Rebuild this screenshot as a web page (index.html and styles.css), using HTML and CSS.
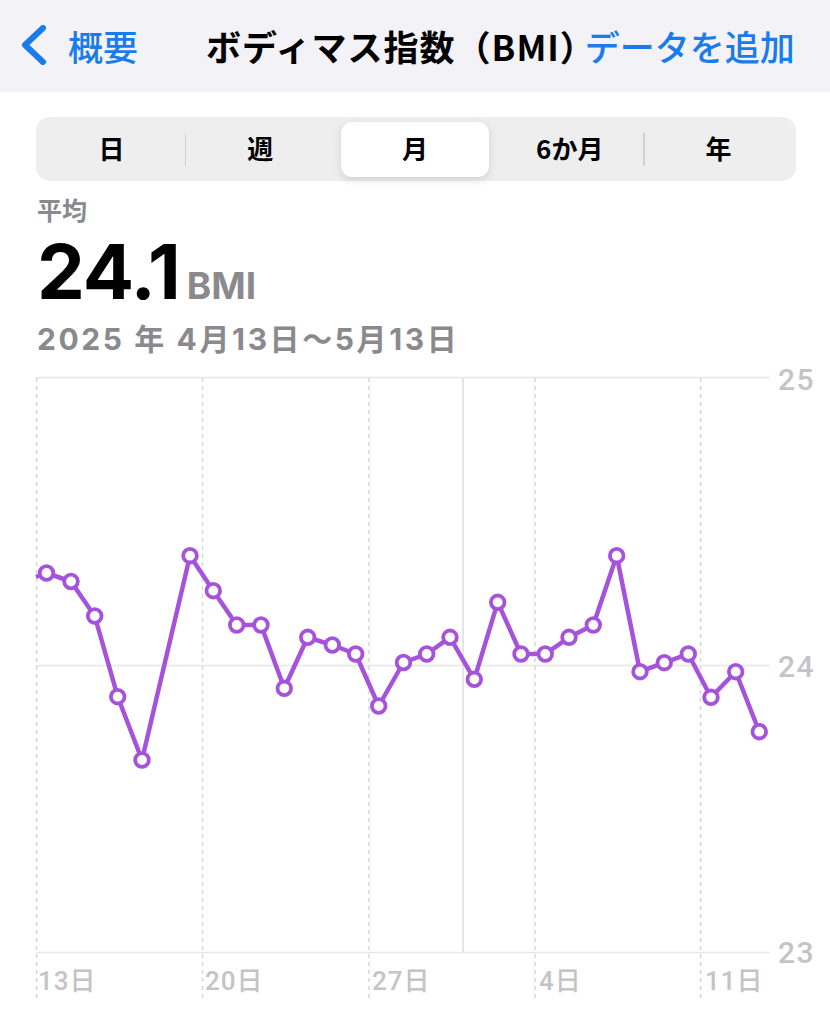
FILE: index.html
```html
<!DOCTYPE html>
<html lang="ja">
<head>
<meta charset="utf-8">
<title>ボディマス指数（BMI）</title>
<link rel="stylesheet" href="styles.css">
</head>
<body>
<header class="nav">
  <div class="back">
    <svg class="chev" width="28" height="40" viewBox="0 0 28 40"><polyline points="23,3 5,20 23,37" fill="none" stroke="#1a7bea" stroke-width="6" stroke-linecap="round" stroke-linejoin="round"/></svg>
    <span class="back-label">概要</span>
  </div>
  <h1 class="title">ボディマス指数（BMI）</h1>
  <span class="add">データを追加</span>
</header>

<div class="segmented">
  <div class="seg">日</div>
  <div class="seg sep">週</div>
  <div class="seg selected">月</div>
  <div class="seg">6か月</div>
  <div class="seg sep">年</div>
</div>

<section class="summary">
  <div class="label">平均</div>
  <div class="value"><span class="num">24.1</span><span class="unit">BMI</span></div>
  <div class="range">2025 年 4月13日～5月13日</div>
</section>

<svg class="chart" width="830" height="664" viewBox="0 360 830 664">
  <g class="grid-h" stroke="#e6e6e8" stroke-width="1.5">
    <line x1="36" y1="377.5" x2="770" y2="377.5"/>
    <line x1="36" y1="665.5" x2="770" y2="665.5"/>
    <line x1="36" y1="952.5" x2="770" y2="952.5"/>
  </g>
  <g stroke="#d6d6d8" stroke-width="1.5" stroke-dasharray="4 4">
    <line x1="36.5" y1="378" x2="36.5" y2="1000"/>
    <line x1="202.5" y1="378" x2="202.5" y2="1000"/>
    <line x1="369" y1="378" x2="369" y2="1000"/>
    <line x1="535" y1="378" x2="535" y2="1000"/>
    <line x1="700.5" y1="378" x2="700.5" y2="1000"/>
  </g>
  <line x1="463" y1="378" x2="463" y2="952" stroke="#dcdcde" stroke-width="1.5"/>
  <g class="ylab">
    <text x="778" y="390">25</text>
    <text x="778" y="677">24</text>
    <text x="778" y="963">23</text>
  </g>
  <g class="xlab">
    <text x="38" y="990">13日</text>
    <text x="205" y="990">20日</text>
    <text x="372" y="990">27日</text>
    <text x="539" y="990">4日</text>
    <text x="705" y="990">11日</text>
  </g>
  <polyline fill="none" stroke="#a653dc" stroke-width="4.5" stroke-linejoin="round" points="36,577 46.5,573 71,581.5 94.7,616 117.7,696.7 142,760 190,555.7 213.3,590.7 236.7,625 261,625 284.3,688.3 307.7,637.3 332.3,645 355.7,654 378.7,706 403.5,662.5 426.7,654 450,637.3 474.3,679.3 497.7,602.3 521,654 545.3,654 569,637.3 593.3,625 616.7,555.7 640,671.7 664.3,662.7 688.3,654 711,697.3 735.7,671.7 759.3,731.7"/>
  <g fill="#ffffff" stroke="#a653dc" stroke-width="3.8">
    <circle cx="46.5" cy="573" r="6.8"/>
    <circle cx="71" cy="581.5" r="6.8"/>
    <circle cx="94.7" cy="616" r="6.8"/>
    <circle cx="117.7" cy="696.7" r="6.8"/>
    <circle cx="142" cy="760" r="6.8"/>
    <circle cx="190" cy="555.7" r="6.8"/>
    <circle cx="213.3" cy="590.7" r="6.8"/>
    <circle cx="236.7" cy="625" r="6.8"/>
    <circle cx="261" cy="625" r="6.8"/>
    <circle cx="284.3" cy="688.3" r="6.8"/>
    <circle cx="307.7" cy="637.3" r="6.8"/>
    <circle cx="332.3" cy="645" r="6.8"/>
    <circle cx="355.7" cy="654" r="6.8"/>
    <circle cx="378.7" cy="706" r="6.8"/>
    <circle cx="403.5" cy="662.5" r="6.8"/>
    <circle cx="426.7" cy="654" r="6.8"/>
    <circle cx="450" cy="637.3" r="6.8"/>
    <circle cx="474.3" cy="679.3" r="6.8"/>
    <circle cx="497.7" cy="602.3" r="6.8"/>
    <circle cx="521" cy="654" r="6.8"/>
    <circle cx="545.3" cy="654" r="6.8"/>
    <circle cx="569" cy="637.3" r="6.8"/>
    <circle cx="593.3" cy="625" r="6.8"/>
    <circle cx="616.7" cy="555.7" r="6.8"/>
    <circle cx="640" cy="671.7" r="6.8"/>
    <circle cx="664.3" cy="662.7" r="6.8"/>
    <circle cx="688.3" cy="654" r="6.8"/>
    <circle cx="711" cy="697.3" r="6.8"/>
    <circle cx="735.7" cy="671.7" r="6.8"/>
    <circle cx="759.3" cy="731.7" r="6.8"/>
  </g>
</svg>
</body>
</html>
```
FILE: styles.css
```css
* { box-sizing: border-box; }
html, body { margin: 0; padding: 0; background: #ffffff; }
body {
  width: 830px;
  height: 1024px;
  overflow: hidden;
  font-family: Inter, "Noto Sans CJK JP", sans-serif;
  color: #000;
}
.nav {
  height: 92px;
  background: #f2f2f7;
  display: flex;
  align-items: center;
  padding: 0 0 2px 20px;
}
.back {
  display: flex;
  align-items: center;
  gap: 20px;
  color: #1a7bea;
}
.chev { display: block; }
.back-label {
  font-family: "Noto Sans CJK JP", sans-serif;
  font-size: 35px;
  font-weight: 500;
  line-height: 1;
}
.title {
  margin: 0 0 0 68px;
  font-family: "Noto Sans CJK JP", sans-serif;
  font-size: 35px;
  font-weight: 700;
  line-height: 1;
  letter-spacing: 1px;
  white-space: nowrap;
}
.add {
  margin-left: -11px;
  font-family: "Noto Sans CJK JP", sans-serif;
  font-size: 35px;
  font-weight: 500;
  color: #1a7bea;
  line-height: 1;
  white-space: nowrap;
}
.segmented {
  margin: 25px 34px 0 36px;
  height: 64px;
  background: #eeeeef;
  border-radius: 14px;
  padding: 5px 3px 4px 1px;
  display: flex;
}
.seg {
  flex: 1;
  position: relative;
  display: flex;
  align-items: center;
  justify-content: center;
  padding-bottom: 3px;
  font-family: "Noto Sans CJK JP", sans-serif;
  font-size: 26px;
  font-weight: 700;
  line-height: 1;
}
.seg.sep::before {
  content: "";
  position: absolute;
  left: -1px;
  top: 11px;
  width: 1.5px;
  height: 33px;
  background: #d2d2d5;
}
.seg.selected {
  background: #ffffff;
  border-radius: 11px;
  margin: 0 6px;
  box-shadow: 0 3px 8px rgba(0,0,0,0.12), 0 0 1px rgba(0,0,0,0.06);
}
.summary {
  padding: 0 0 0 37px;
  margin-top: 13px;
}
.label {
  font-family: "Noto Sans CJK JP", sans-serif;
  font-size: 25px;
  font-weight: 700;
  color: #8a8a8e;
  line-height: 30px;
}
.value {
  display: flex;
  align-items: baseline;
  line-height: 80px;
  margin-top: 7px;
}
.num {
  font-size: 76px;
  font-weight: 700;
  letter-spacing: -1px;
}
.unit {
  margin-left: 7px;
  font-size: 37px;
  font-weight: 700;
  color: #8a8a8e;
}
.range {
  margin-top: -7px;
  font-size: 30px;
  font-weight: 700;
  color: #8a8a8e;
  line-height: 40px;
  letter-spacing: 2.6px;
}
.chart {
  display: block;
  margin-top: 1px;
}
.ylab text {
  font-family: Roboto, sans-serif;
  font-size: 30px;
  font-weight: 500;
  fill: #c4c4c6;
  letter-spacing: 1.5px;
}
.xlab text {
  font-family: Roboto, "Noto Sans CJK JP", sans-serif;
  font-size: 26px;
  font-weight: 500;
  fill: #c4c4c6;
  letter-spacing: 1px;
}
```
